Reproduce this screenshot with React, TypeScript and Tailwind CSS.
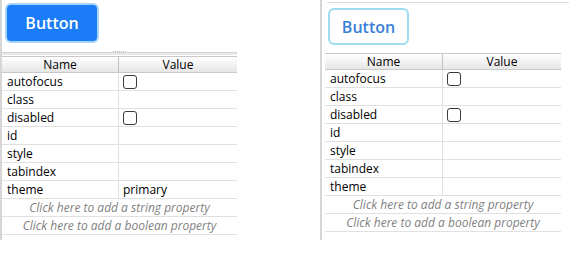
import React from 'react';

type Prop = { name: string; kind: 'bool' | 'text'; value?: string };

const leftProps: Prop[] = [
  { name: 'autofocus', kind: 'bool' },
  { name: 'class', kind: 'text' },
  { name: 'disabled', kind: 'bool' },
  { name: 'id', kind: 'text' },
  { name: 'style', kind: 'text' },
  { name: 'tabindex', kind: 'text' },
  { name: 'theme', kind: 'text', value: 'primary' },
];

const rightProps: Prop[] = leftProps.map((p) => (p.name === 'theme' ? { ...p, value: undefined } : p));

function Checkbox() {
  return <div className="w-[14px] h-[14px] rounded-[3px] border border-[#3a3a3a] bg-white" />;
}

function PropertyTable({ rows, nameWidth }: { rows: Prop[]; nameWidth: number }) {
  return (
    <div className="w-full text-[12px] text-black">
      {/* header */}
      <div className="flex h-[17px] border-y border-[#c9c9c9] bg-gradient-to-b from-white to-[#e6e6e6] leading-[15px]">
        <div className="text-center border-r border-[#c3c3c3]" style={{ width: nameWidth }}>
          Name
        </div>
        <div className="flex-1 text-center">Value</div>
      </div>
      {rows.map((r) => (
        <div key={r.name} className="flex h-[18px] border-b border-[#e0e0e0] leading-[17px]">
          <div className="pl-[5px] border-r border-[#e0e0e0]" style={{ width: nameWidth }}>
            {r.name}
          </div>
          <div className="flex-1 pl-[4px] flex items-center">
            {r.kind === 'bool' ? <Checkbox /> : r.value}
          </div>
        </div>
      ))}
      <div className="h-[18px] border-b border-[#e0e0e0] text-center italic text-[#7f7f7f] leading-[17px]">
        Click here to add a string property
      </div>
      <div className="h-[18px] border-b border-[#e0e0e0] text-center italic text-[#7f7f7f] leading-[17px]">
        Click here to add a boolean property
      </div>
    </div>
  );
}

export default function App() {
  return (
    <div
      className="w-[581px] h-[256px] bg-white flex overflow-hidden"
      style={{ fontFamily: '"Open Sans", "Noto Sans", sans-serif' }}
    >
      {/* primary theme panel */}
      <div className="w-[237px] h-[240px] border-l-2 border-[#d6d6d6] flex flex-col">
        <div className="h-[52px] pl-[3px] pt-[3px]">
          <button className="w-[94px] h-[40px] rounded-[6px] bg-[#1a7cf6] border-2 border-[#a6d5fb] text-white text-[16px] font-semibold">
            Button
          </button>
        </div>
        <div className="relative h-[3px] bg-[#e8e8e8] border-t border-[#d4d4d4]">
          <div className="absolute left-[111px] -top-[2px] w-[13px] border-t border-dotted border-[#bdbdbd]" />
        </div>
        <div className="h-[1px]" />
        <PropertyTable rows={leftProps} nameWidth={117} />
      </div>

      <div className="w-[83px]" />

      {/* default theme panel */}
      <div className="w-[249px] h-[240px] border-l-2 border-[#d6d6d6] flex flex-col">
        <div className="mt-[2px] h-[1px] bg-[#dadada] ml-[5px]" />
        <div className="pl-[6px] pt-[5px] h-[50px]">
          <button className="w-[81px] h-[37px] rounded-[6px] bg-white border-2 border-[#9ddcf0] text-[#3a7fd6] text-[16px] font-semibold">
            Button
          </button>
        </div>
        <div className="ml-[3px] w-[236px]">
          <PropertyTable rows={rightProps} nameWidth={118} />
        </div>
      </div>
    </div>
  );
}
